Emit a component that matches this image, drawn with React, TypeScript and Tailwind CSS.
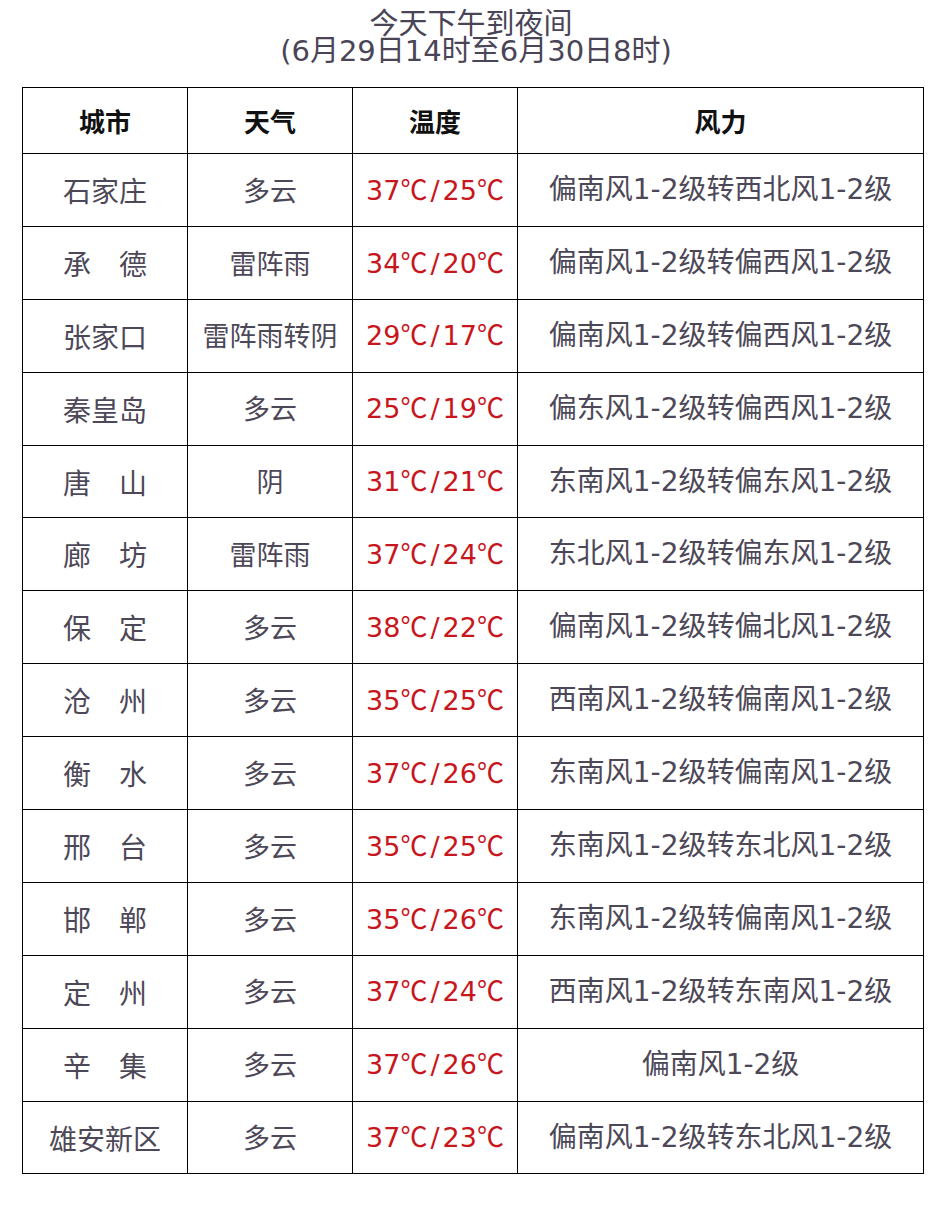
import React from "react";

const rows: [string, string, string, string, string][] = [
  ["石家庄", "多云", "37", "25", "偏南风1-2级转西北风1-2级"],
  ["承　德", "雷阵雨", "34", "20", "偏南风1-2级转偏西风1-2级"],
  ["张家口", "雷阵雨转阴", "29", "17", "偏南风1-2级转偏西风1-2级"],
  ["秦皇岛", "多云", "25", "19", "偏东风1-2级转偏西风1-2级"],
  ["唐　山", "阴", "31", "21", "东南风1-2级转偏东风1-2级"],
  ["廊　坊", "雷阵雨", "37", "24", "东北风1-2级转偏东风1-2级"],
  ["保　定", "多云", "38", "22", "偏南风1-2级转偏北风1-2级"],
  ["沧　州", "多云", "35", "25", "西南风1-2级转偏南风1-2级"],
  ["衡　水", "多云", "37", "26", "东南风1-2级转偏南风1-2级"],
  ["邢　台", "多云", "35", "25", "东南风1-2级转东北风1-2级"],
  ["邯　郸", "多云", "35", "26", "东南风1-2级转偏南风1-2级"],
  ["定　州", "多云", "37", "24", "西南风1-2级转东南风1-2级"],
  ["辛　集", "多云", "37", "26", "偏南风1-2级"],
  ["雄安新区", "多云", "37", "23", "偏南风1-2级转东北风1-2级"],
];

const font = "[font-family:'DejaVu_Sans','Noto_Sans_CJK_SC',sans-serif]";
const cjk = "[font-family:'Noto_Sans_CJK_SC',sans-serif]";
const cell = "border-[1.5px] border-black text-center whitespace-nowrap";

export default function App() {
  return (
    <div className={`w-[942px] h-[1218px] bg-white ${font}`}>
      <div className="pt-[7px] flex flex-col items-center text-[#4a4556] text-[29px]">
        <div className={`${cjk} leading-[29px]`}>今天下午到夜间</div>
        <div className="leading-[31px] pl-[10px]">(6月29日14时至6月30日8时)</div>
      </div>
      <div className="pl-[22px] pt-[20px]">
        <table className="border-collapse w-[901px] table-fixed">
          <colgroup>
            <col className="w-[165px]" />
            <col className="w-[165px]" />
            <col className="w-[165px]" />
            <col className="w-[406px]" />
          </colgroup>
          <thead>
            <tr className="h-[66px]">
              {["城市", "天气", "温度", "风力"].map((h) => (
                <th key={h} className={`${cell} ${cjk} text-[26px] font-bold text-[#111]`}>
                  {h}
                </th>
              ))}
            </tr>
          </thead>
          <tbody>
            {rows.map((r, i) => (
              <tr key={i} className="h-[72.9px]">
                <td className={`${cell} ${cjk} text-[28px] text-[#4d4858]`}>{r[0]}</td>
                <td className={`${cell} ${cjk} text-[27px] text-[#4d4858]`}>{r[1]}</td>
                <td className={`${cell} text-[27px] text-[#c8161d]`}>
                  {r[2]}
                  <span className={cjk}>℃</span>
                  <span className="px-[3px]">/</span>
                  {r[3]}
                  <span className={cjk}>℃</span>
                </td>
                <td className={`${cell} text-[28px] text-[#4d4858]`}>{r[4]}</td>
              </tr>
            ))}
          </tbody>
        </table>
      </div>
    </div>
  );
}
